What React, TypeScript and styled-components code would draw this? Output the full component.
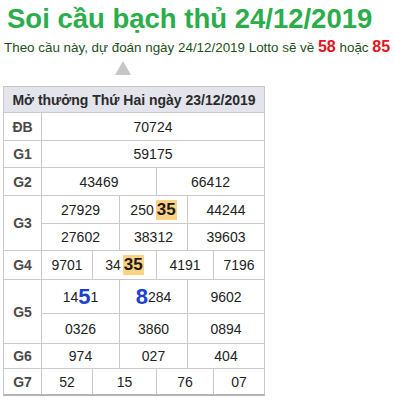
import { Fragment } from 'react'
import styled, { createGlobalStyle } from 'styled-components'

const Global = createGlobalStyle`
  body {
    margin: 0;
    background: #fff;
    font-family: "Liberation Sans", Arial, sans-serif;
  }
`

const Page = styled.div`
  padding: 3px 0 0 3px;
`

const Title = styled.h1`
  margin: 0 0 0 4px;
  font-size: 27.5px;
  line-height: 32px;
  font-weight: bold;
  color: #2aad4a;
`

const Lead = styled.p`
  margin: 3px 0 0 1px;
  font-size: 13.4px;
  line-height: 18px;
  color: #1d4f1d;
`

const Lucky = styled.b`
  font-size: 16px;
  color: #e3141b;
`

const Arrow = styled.div`
  width: 0;
  height: 0;
  margin: 4px 0 11px 112px;
  border-left: 8px solid transparent;
  border-right: 8px solid transparent;
  border-bottom: 14px solid #c6c6c6;
`

const Board = styled.div`
  display: grid;
  width: max-content;
  grid-template-columns: 37px 50px 26px 36px 30px 25px 50px;
  grid-template-rows: 25px 27px 26px 27px 27px 26px 28px 33px 29px 24px 25px;
  gap: 1px;
  background: #c9c9c9;
  border: 1px solid #c9c9c9;
  border-bottom: 2px solid #b4b4b4;
`

const Caption = styled.div`
  grid-column: 1 / -1;
  display: flex;
  align-items: center;
  justify-content: center;
  background: #e4e4ec;
  color: #2b2b2b;
  font-size: 14px;
  font-weight: bold;
`

const Label = styled.div<{ $rows?: number }>`
  grid-row: span ${p => p.$rows ?? 1};
  display: flex;
  align-items: center;
  justify-content: center;
  background: #fff;
  color: #4a4a4a;
  font-size: 14px;
  font-weight: bold;
`

const Cell = styled.div<{ $cols: number }>`
  grid-column: span ${p => p.$cols};
  display: flex;
  align-items: center;
  justify-content: center;
  background: #fff;
  color: #222;
  font-size: 14px;
`

const Hit = styled.b`
  display: inline-block;
  margin-left: 2px;
  padding: 0 1px;
  background: #fdd282;
  color: #1a1a1a;
  font-size: 17px;
  line-height: 20px;
`

const Big = styled.b`
  color: #1c3fcf;
  font-size: 22px;
`

type Line = React.ReactNode[]

const rows: { label: string; lines: Line[]; cols: number }[] = [
  { label: 'ĐB', cols: 6, lines: [['70724']] },
  { label: 'G1', cols: 6, lines: [['59175']] },
  { label: 'G2', cols: 3, lines: [['43469', '66412']] },
  {
    label: 'G3',
    cols: 2,
    lines: [
      ['27929', <>250<Hit>35</Hit></>, '44244'],
      ['27602', '38312', '39603'],
    ],
  },
  { label: 'G4', cols: 0, lines: [['9701', <>34<Hit>35</Hit></>, '4191', '7196']] },
  {
    label: 'G5',
    cols: 2,
    lines: [
      [<>14<Big>5</Big>1</>, <><Big>8</Big>284</>, '9602'],
      ['0326', '3860', '0894'],
    ],
  },
  { label: 'G6', cols: 2, lines: [['974', '027', '404']] },
  { label: 'G7', cols: 0, lines: [['52', '15', '76', '07']] },
]

// four-number rows sit on an uneven split: 1 + 2 + 2 + 1 of the six tracks
const fourSplit = [1, 2, 2, 1]

export default function App() {
  return (
    <Page>
      <Global />
      <Title>Soi cầu bạch thủ 24/12/2019</Title>
      <Lead>
        Theo cầu này, dự đoán ngày 24/12/2019 Lotto sẽ về <Lucky>58</Lucky> hoặc <Lucky>85</Lucky>
      </Lead>
      <Arrow />
      <Board>
        <Caption>Mở thưởng Thứ Hai ngày 23/12/2019</Caption>
        {rows.map(r =>
          r.lines.map((line, li) => (
            <Fragment key={r.label + li}>
              {li === 0 && <Label $rows={r.lines.length}>{r.label}</Label>}
              {line.map((v, i) => (
                <Cell key={i} $cols={r.cols || fourSplit[i]}>{v}</Cell>
              ))}
            </Fragment>
          ))
        )}
      </Board>
    </Page>
  )
}
